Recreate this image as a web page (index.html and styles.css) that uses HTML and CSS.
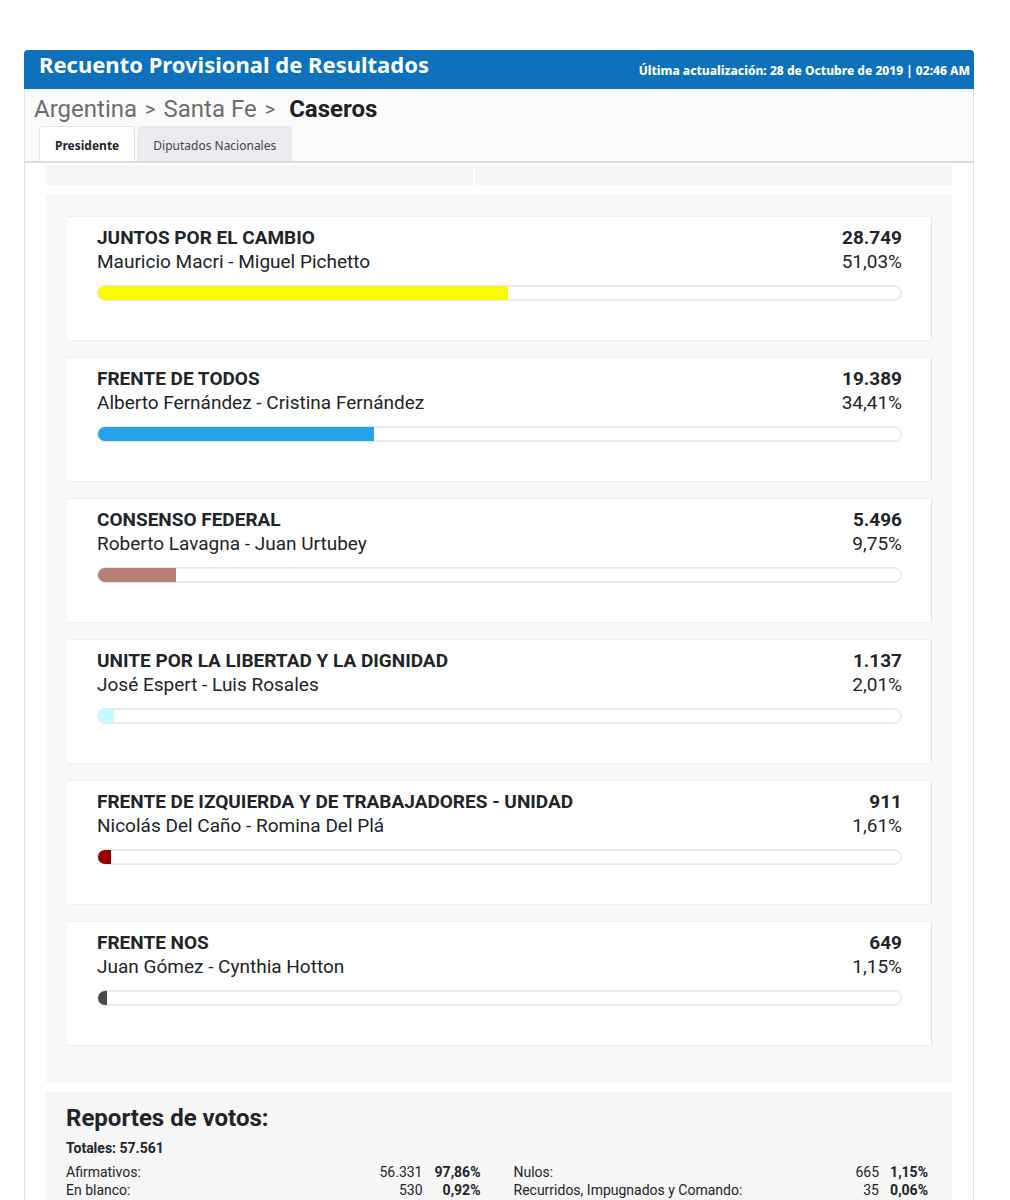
FILE: index.html
```html
<!DOCTYPE html>
<html lang="es">
<head>
<meta charset="utf-8">
<meta name="viewport" content="width=device-width, initial-scale=1">
<title>Recuento Provisional de Resultados</title>
<link rel="stylesheet" href="styles.css">
</head>
<body>
<main class="panel">
  <header class="panel-header">
    <h1 class="panel-title">Recuento Provisional de Resultados</h1>
    <p class="panel-updated">Última actualización: 28 de Octubre de 2019 | 02:46 AM</p>
  </header>

  <div class="panel-nav">
    <nav class="breadcrumb" aria-label="Ubicación">
      <a href="#argentina">Argentina</a>
      <span class="separator">&gt;</span>
      <a href="#santa-fe">Santa Fe</a>
      <span class="separator">&gt;</span>
      <strong class="current">Caseros</strong>
    </nav>
    <div class="tabs" role="tablist">
      <button class="tab tab-active" type="button" role="tab" aria-selected="true">Presidente</button>
      <button class="tab" type="button" role="tab" aria-selected="false">Diputados Nacionales</button>
    </div>
  </div>

  <div class="panel-body">
    <div class="summary">
      <div class="summary-cell"></div>
      <div class="summary-cell"></div>
    </div>

    <section class="results" aria-label="Resultados">
      <article class="card">
        <div class="row row-party"><h2>JUNTOS POR EL CAMBIO</h2><span>28.749</span></div>
        <div class="row row-ticket"><span>Mauricio Macri - Miguel Pichetto</span><span>51,03%</span></div>
        <div class="bar"><div class="fill fill-yellow" style="width: 51.03%"></div></div>
      </article>
      <article class="card">
        <div class="row row-party"><h2>FRENTE DE TODOS</h2><span>19.389</span></div>
        <div class="row row-ticket"><span>Alberto Fernández - Cristina Fernández</span><span>34,41%</span></div>
        <div class="bar"><div class="fill fill-blue" style="width: 34.41%"></div></div>
      </article>
      <article class="card">
        <div class="row row-party"><h2>CONSENSO FEDERAL</h2><span>5.496</span></div>
        <div class="row row-ticket"><span>Roberto Lavagna - Juan Urtubey</span><span>9,75%</span></div>
        <div class="bar"><div class="fill fill-brown" style="width: 9.75%"></div></div>
      </article>
      <article class="card">
        <div class="row row-party"><h2>UNITE POR LA LIBERTAD Y LA DIGNIDAD</h2><span>1.137</span></div>
        <div class="row row-ticket"><span>José Espert - Luis Rosales</span><span>2,01%</span></div>
        <div class="bar"><div class="fill fill-cyan" style="width: 2.01%"></div></div>
      </article>
      <article class="card">
        <div class="row row-party"><h2>FRENTE DE IZQUIERDA Y DE TRABAJADORES - UNIDAD</h2><span>911</span></div>
        <div class="row row-ticket"><span>Nicolás Del Caño - Romina Del Plá</span><span>1,61%</span></div>
        <div class="bar"><div class="fill fill-red" style="width: 1.61%"></div></div>
      </article>
      <article class="card">
        <div class="row row-party"><h2>FRENTE NOS</h2><span>649</span></div>
        <div class="row row-ticket"><span>Juan Gómez - Cynthia Hotton</span><span>1,15%</span></div>
        <div class="bar"><div class="fill fill-gray" style="width: 1.15%"></div></div>
      </article>
    </section>

    <section class="report">
      <h2 class="report-title">Reportes de votos:</h2>
      <p class="report-total">Totales: 57.561</p>
      <div class="report-tables">
        <table class="votes">
          <tr><th scope="row">Afirmativos:</th><td>56.331</td><td class="share">97,86%</td></tr>
          <tr><th scope="row">En blanco:</th><td>530</td><td class="share">0,92%</td></tr>
        </table>
        <table class="votes votes-narrow">
          <tr><th scope="row">Nulos:</th><td>665</td><td class="share">1,15%</td></tr>
          <tr><th scope="row">Recurridos, Impugnados y Comando:</th><td>35</td><td class="share">0,06%</td></tr>
        </table>
      </div>
    </section>
  </div>
</main>
</body>
</html>
```
FILE: styles.css
```css
* {
  box-sizing: border-box;
}

body {
  margin: 0;
  padding: 50px 36px 0 24px;
  background: #fff;
  color: #212529;
  font-family: Roboto, sans-serif;
}

h1,
h2,
p {
  margin: 0;
}

.panel-header {
  display: flex;
  justify-content: space-between;
  height: 39px;
  padding: 0 4px 0 15px;
  border-radius: 4px 4px 0 0;
  background: #0d72bb;
  color: #fff;
  font-family: "Noto Sans", sans-serif;
}

.panel-title {
  font-size: 22px;
  line-height: 28px;
}

.panel-updated {
  font-size: 12px;
  font-weight: 800;
  line-height: 41px;
}

.panel-nav {
  padding: 3px 9px 0;
  border: 1px solid #dee2e6;
  border-top: 0;
  border-bottom: 2px solid #dadde1;
  background: #fafafa;
}

.breadcrumb {
  display: flex;
  gap: 8px;
  color: #6d6d6d;
  font-size: 24px;
  line-height: 34px;
}

.breadcrumb a {
  color: inherit;
  text-decoration: none;
}

.separator {
  font-size: 20px;
}

.current {
  margin-left: 6px;
  color: #212121;
  font-weight: 700;
}

.tabs {
  display: flex;
  gap: 2px;
  padding-left: 5px;
}

.tab {
  height: 35px;
  padding: 2px 15px 0;
  border: 1px solid #ebebef;
  border-bottom: 0;
  border-radius: 4px 4px 0 0;
  background: #ebebef;
  color: #42454c;
  font-family: "Noto Sans", sans-serif;
  font-size: 12px;
}

.tab-active {
  border-color: #e2e4e8;
  background: #fff;
  color: #212529;
  font-weight: 700;
}

.panel-body {
  padding: 2px 21px 0;
  border: 1px solid #e0e3e6;
  border-width: 0 1px;
}

.summary {
  display: grid;
  grid-template-columns: 427fr 478fr;
  gap: 2px;
}

.summary-cell {
  height: 20px;
  background: #f6f6f6;
}

.results {
  display: flex;
  flex-direction: column;
  gap: 16px;
  margin: 10px 0 9px;
  padding: 21px 20px 37px;
  background: #f7f8fa;
}

.card {
  height: 125px;
  padding: 9px 29px 0 30px;
  border: 1px solid #eef0f1;
  border-right-color: #e0e3e6;
  border-left-color: #f4f5f6;
  border-radius: 2px;
  background: #fff;
}

.row {
  display: flex;
  justify-content: space-between;
  line-height: 24px;
}

.row-party,
.row-party h2 {
  font-size: 19px;
  font-weight: 700;
}

.row-ticket {
  font-size: 19px;
}

.bar {
  height: 16px;
  margin-top: 11px;
  overflow: hidden;
  border: 1px solid #e6e7e8;
  border-radius: 8px;
  box-shadow: inset 0 0 0 1px #ececed;
}

.fill {
  height: 100%;
}

.fill-yellow {
  background: #fbfb00;
}

.fill-blue {
  background: #24a2ea;
}

.fill-brown {
  background: #b97f75;
}

.fill-cyan {
  background: #c1fbff;
}

.fill-red {
  background: #960000;
}

.fill-gray {
  background: #4a4a4c;
}

.report {
  padding: 10px 24px 1px 20px;
  background: #f6f6f6;
}

.report-title {
  font-size: 24px;
  line-height: 32px;
}

.report-total {
  padding: 4px 0 5px;
  font-size: 14px;
  font-weight: 700;
  line-height: 20px;
}

.report-tables {
  display: grid;
  grid-template-columns: 1fr 1fr;
  gap: 33px;
}

.votes {
  width: 100%;
  border-collapse: collapse;
  font-size: 14px;
  line-height: 18px;
}

.votes th {
  padding: 0;
  font-weight: 400;
  text-align: left;
}

.votes td {
  padding: 0;
  text-align: right;
}

.votes .share {
  width: 58px;
  font-weight: 700;
}

.votes-narrow .share {
  width: 49px;
}
```
